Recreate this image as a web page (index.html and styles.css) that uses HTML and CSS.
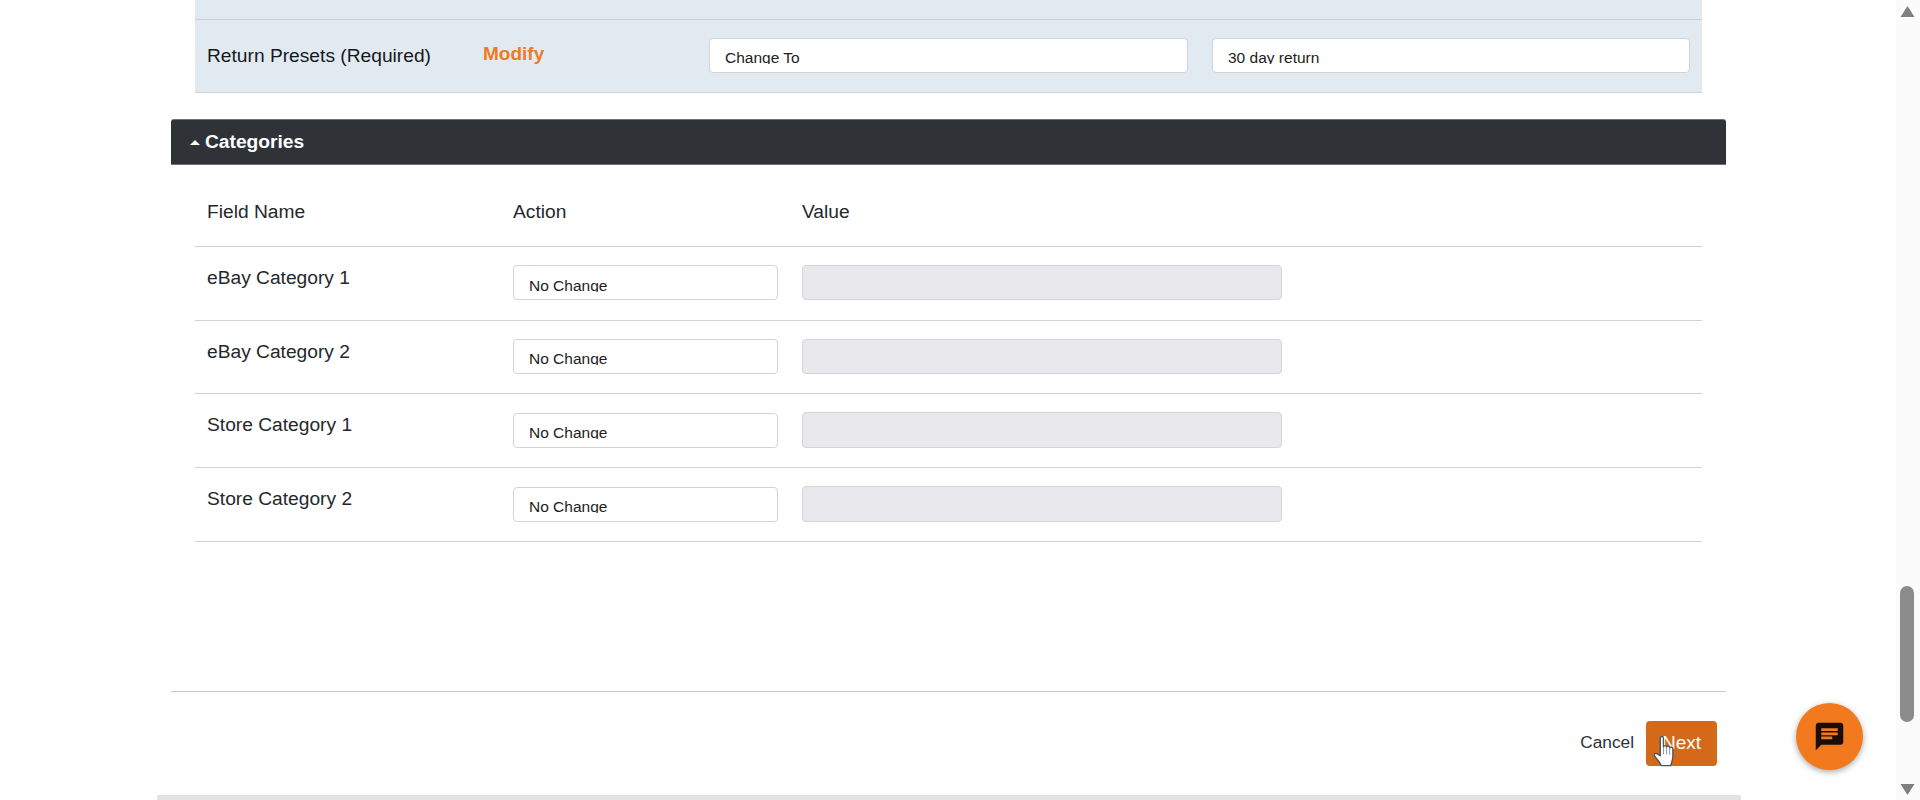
FILE: index.html
```html
<!DOCTYPE html>
<html lang="en">
<head>
<meta charset="utf-8">
<title>Bulk edit</title>
<link rel="stylesheet" href="styles.css">
</head>
<body>
<div class="viewport">
  <div class="page">
    <main class="sheet">
      <div class="panel">
        <div class="panel-top"></div>
        <div class="preset-row">
          <div class="preset-label">Return Presets (Required)</div>
          <a class="modify">Modify</a>
          <div class="control preset-control"><span class="control-text">Change To</span></div>
          <div class="control preset-control"><span class="control-text">30 day return</span></div>
        </div>
      </div>
      <section class="section">
        <h2 class="section-head"><span class="caret"></span>Categories</h2>
        <div class="table">
          <div class="row head-row">
            <div class="cell">Field Name</div>
            <div class="cell">Action</div>
            <div class="cell">Value</div>
          </div>
          <div class="row row-first">
            <div class="cell name">eBay Category 1</div>
            <div class="control action-control"><span class="control-text">No Change</span></div>
            <div class="value-box"></div>
          </div>
          <div class="row row-short">
            <div class="cell name">eBay Category 2</div>
            <div class="control action-control"><span class="control-text">No Change</span></div>
            <div class="value-box"></div>
          </div>
          <div class="row row-tall">
            <div class="cell name">Store Category 1</div>
            <div class="control action-control"><span class="control-text">No Change</span></div>
            <div class="value-box"></div>
          </div>
          <div class="row row-tall">
            <div class="cell name">Store Category 2</div>
            <div class="control action-control"><span class="control-text">No Change</span></div>
            <div class="value-box"></div>
          </div>
        </div>
      </section>
      <footer class="footer">
        <a class="cancel">Cancel</a>
        <button class="next" type="button">Next</button>
      </footer>
    </main>
    <div class="page-edge"></div>
  </div>
  <div class="scrollbar">
    <svg class="arrow" viewBox="0 0 14 11"><path d="M7 0 14 11H0z"/></svg>
    <div class="thumb"></div>
    <svg class="arrow" viewBox="0 0 14 11"><path d="M0 0H14L7 11z"/></svg>
  </div>
  <button class="fab" type="button" aria-label="Chat">
    <svg viewBox="0 0 24 24" width="33" height="33"><path fill="#1a0f08" d="M20 2H4c-1.100 0-1.990.9-1.990 2L2 22l4-4h14c1.100 0 2-.9 2-2V4c0-1.100-.9-2-2-2zM6 9h12v2H6V9zm8 5H6v-2h8v2zm4-6H6V6h12v2z"/></svg>
  </button>
  <svg class="hand" viewBox="0 0 22 31" width="23" height="33"><path fill="#fff" stroke="#4c5563" stroke-width="1.300" stroke-linejoin="round" d="M7 3c0-2.400 3-2.400 3 0v8c.6-1.600 3-1.600 3 .3.6-1.400 3-1.300 3 .6.800-1 3-.6 3 1.100v7c0 4.500-1.500 6-2 9H8c-1-2.500-3-4.500-6.300-9-1.200-1.700.6-3.600 2.300-2.200L7 19.500z"/><path fill="none" stroke="#7a7f87" stroke-width=".8" d="M10 11v7M13 11.300v7M16 12v6.500"/></svg>
</div>
</body>
</html>
```
FILE: styles.css
```css
* { box-sizing: border-box; }
html, body { margin: 0; height: 100%; overflow: hidden; background: #fff; }
body { font-family: "Liberation Sans", Arial, sans-serif; color: #24282d; }

.viewport { position: relative; display: flex; width: 1920px; height: 800px; }

.page { width: 1896px; height: 800px; padding-left: 157px; display: flex; flex-direction: column; }
.sheet { width: 1584px; height: 795px; padding: 0 15px 0 14px; }
.page-edge { width: 1584px; height: 5px; background: #e3e3e3; }

.panel { margin: 0 24px; background: #e2eaf1; }
.panel-top { height: 20px; border-bottom: 1px solid #c6ced4; }
.preset-row { display: grid; grid-template-columns: 276px 226px 479px 478px; align-items: center; height: 73px; padding-left: 12px; border-bottom: 1px solid #cdd4da; font-size: 19.2px; }
.preset-label { color: #16191c; white-space: nowrap; }
.modify { font-weight: 700; color: #ee7a24; font-size: 19px; margin-top: -4px; }
.preset-control { margin-top: -1px; }
.preset-control + .preset-control { margin-left: 24px; width: 478px; }

.control { height: 35px; background: #fff; border: 1px solid #cfd4d9; border-radius: 4px; padding: 10px 15px 0; }
.control-text { display: block; height: 15px; overflow: hidden; font-size: 15.5px; line-height: 18px; color: #1b1d20; }

.section { margin-top: 26px; }
.section-head { display: flex; align-items: center; height: 46px; margin: 0; padding-left: 19px; background: #2f3237; border: 1px solid #6f7276; border-width: 1px 0; border-radius: 3px 3px 0 0; color: #fff; font-size: 19.2px; font-weight: 700; }
.caret { width: 0; height: 0; margin-right: 5px; border: 5px solid transparent; border-top: 0; border-bottom-color: #fff; }

.table { margin: 0 24px; }
.row { display: grid; grid-template-columns: 318px 289px 480px; border-bottom: 1px solid #cfd3d6; font-size: 19.2px; }
.head-row { height: 82px; padding-top: 36px; }
.row-first { height: 74px; padding-top: 18px; }
.row-short { height: 73px; padding-top: 18px; }
.row-tall { height: 74px; padding-top: 19px; }
.cell { line-height: 22px; }
.row .cell:first-child { padding-left: 12px; }
.name { padding-top: 1px; }
.row-first .name, .row-short .name { padding-top: 2px; }
.action-control { width: 265px; }
.row-first .control { padding-top: 11px; }
.value-box { height: 35px; background: #e9e9ed; border: 1px solid #d3d3d8; border-radius: 4px; }
.row-tall .value-box { height: 36px; margin-top: -1px; }

.footer { display: flex; justify-content: flex-end; align-items: center; gap: 12px; margin-top: 149px; padding: 29px 9px 0 0; border-top: 1px solid #c9c9c9; }
.cancel { font-size: 17.3px; color: #2d3238; margin-top: -2px; }
.next { width: 71px; height: 45px; border: 0; border-radius: 4px; background: #d4691a; color: #fff; font: 19px "Liberation Sans", Arial, sans-serif; padding: 0 0 2px; }

.scrollbar { width: 24px; height: 800px; background: #fbfbfb; display: flex; flex-direction: column; align-items: center; padding: 6px 2px 6px 0; }
.arrow { width: 15px; height: 11px; fill: #7f7f7f; flex: none; }
.thumb { width: 14px; height: 136px; margin: 569px 0 62px; background: #8c8c8c; border-radius: 7px; flex: none; }

.fab { position: absolute; left: 1796px; top: 703px; width: 67px; height: 67px; padding: 0; border: 0; border-radius: 50%; background: #f2791d; box-shadow: 0 2px 6px rgba(0,0,0,.35); display: flex; align-items: center; justify-content: center; }
.hand { position: absolute; left: 1653px; top: 735px; }
```
